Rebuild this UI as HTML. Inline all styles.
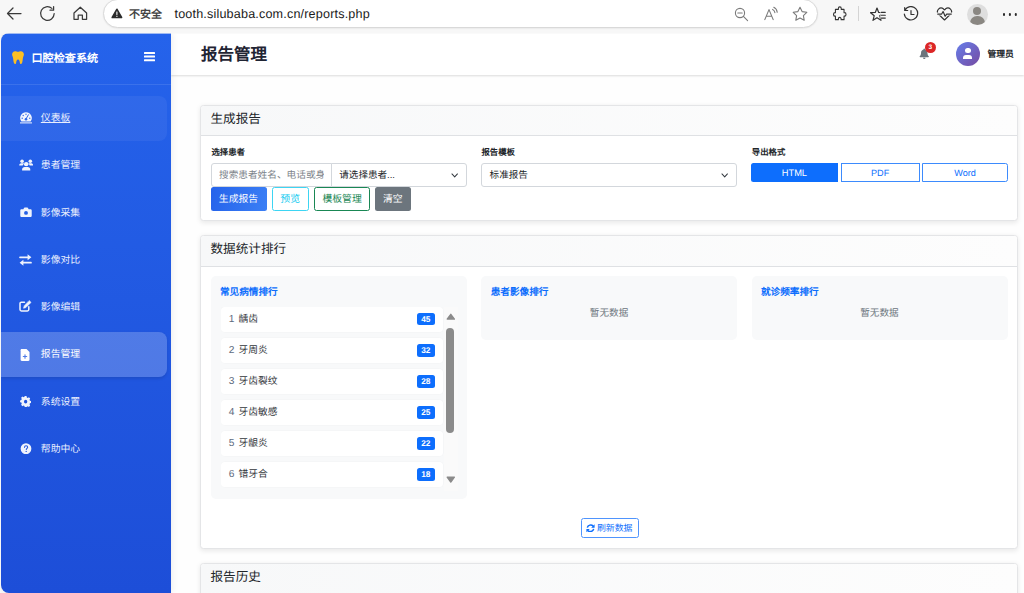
<!DOCTYPE html>
<html lang="zh-CN">
<head>
<meta charset="utf-8">
<title>报告管理</title>
<style>
*{box-sizing:border-box;margin:0;padding:0}
html,body{width:1024px;height:593px;overflow:hidden}
body{font-family:"Liberation Sans",sans-serif;background:#f7f7f7;position:relative;color:#212529;text-rendering:geometricPrecision}
.abs{position:absolute}
svg{display:block}
/* browser toolbar */
#tb{position:absolute;left:0;top:0;width:1024px;height:34px;background:#f7f7f7}
#pill{position:absolute;left:103px;top:-1px;width:715px;height:28.5px;border:1px solid #d9d9d9;border-radius:14.5px;background:#fff;box-shadow:0 0.5px 1.5px rgba(0,0,0,.08)}
#sec{position:absolute;left:129px;top:7.5px;font-size:11px;font-weight:bold;color:#444;line-height:14px;letter-spacing:0}
#url{position:absolute;left:174.5px;top:5.5px;font-size:12.6px;color:#1b1b1b;line-height:17px;white-space:nowrap;letter-spacing:0.17px}
/* page */
#page{position:absolute;left:1px;top:33px;width:1023px;height:560px;overflow:hidden}
#main{position:absolute;left:165px;top:0;width:858px;height:560px;background:#fefefe}
#side{position:absolute;left:0;top:0;width:170px;height:100%;border-radius:8px 0 0 8px;background:linear-gradient(180deg,#2563eb 0%,#1d4ed8 100%);box-shadow:1px 0 7px rgba(0,0,0,.08);z-index:3}
#shead{position:absolute;left:0;top:0;width:170px;height:52px;border-bottom:1px solid rgba(255,255,255,.10)}
#brand{position:absolute;left:30.5px;top:19.2px;font-size:11.1px;font-weight:bold;color:#fff;line-height:14px;white-space:nowrap}
.mi{position:absolute;left:0;width:165.5px;height:44.6px;border-radius:0 8px 8px 0;color:#eef2ff}
.mi span{position:absolute;left:39.8px;top:16.1px;font-size:9.85px;line-height:14px;white-space:nowrap;color:#e9eefd}
.mi svg{position:absolute;left:18px;top:16.5px;opacity:.93}
.mi.act svg{opacity:1}
.mi.hov{background:rgba(255,255,255,.055)}
.mi.hov span{text-decoration:underline}
.mi.act{background:rgba(255,255,255,.21);box-shadow:0 1.5px 3px rgba(0,0,0,.10)}
.mi.act span{color:#fff}
/* header */
#hdr{position:absolute;left:170px;top:0;width:853px;height:42px;background:#fff;box-shadow:0 1px 2px rgba(0,0,0,.14);z-index:2}
#ttl{position:absolute;left:30px;top:11.2px;font-size:16.5px;font-weight:bold;color:#1f2433;line-height:22px;white-space:nowrap}
#adm{position:absolute;left:816.5px;top:14.5px;font-size:8.8px;font-weight:bold;color:#212529;line-height:12px;white-space:nowrap}
/* cards */
.card{position:absolute;left:199px;width:818px;background:#fff;border:1px solid #e4e5e7;border-radius:3.5px;box-shadow:0 1.5px 5px rgba(0,0,0,.085)}
.ch{position:absolute;left:0;top:0;width:100%;height:30px;background:linear-gradient(90deg,#f7f8f9 0%,#fdfdfd 100%);border-bottom:1px solid #dfe1e4;border-radius:3px 3px 0 0}
.ch span{position:absolute;left:9.5px;top:5px;font-size:12.6px;line-height:17px;color:#212529;white-space:nowrap}
.lbl{position:absolute;font-size:8.4px;font-weight:bold;color:#212529;line-height:12px;white-space:nowrap}
.inp{position:absolute;height:24px;border:1px solid #d3d7dc;border-radius:3px;background:#fff;font-size:9.55px;line-height:23.6px;color:#212529;white-space:nowrap;overflow:hidden}
.btn{position:absolute;border-radius:2.5px;font-size:9.3px;text-align:center;white-space:nowrap}
.b2{font-size:9.85px;padding-top:.8px}
.pan{position:absolute;background:#f8f9fa;border-radius:5px}
.pt{position:absolute;left:9.4px;top:9.7px;font-size:9.63px;font-weight:bold;color:#0d6efd;line-height:13px;white-space:nowrap}
.nodata{position:absolute;left:0;width:100%;top:31px;text-align:center;font-size:9.65px;color:#6c757d;line-height:13px}
.li{position:absolute;left:0;width:222px;height:24.9px;background:#fff;border-radius:3.5px;box-shadow:0 0 0 .5px rgba(0,0,0,.025)}
.li span{position:absolute;left:18.1px;top:5.8px;font-size:9.75px;line-height:13px;color:#33373c;white-space:nowrap}
.li i{position:absolute;left:8.3px;top:5.7px;font-size:10.2px;line-height:13px;color:#5d6a7e;font-style:normal}
.li b{position:absolute;left:196.1px;top:6.3px;width:18.4px;height:12.3px;background:#0d6efd;border-radius:2.5px;color:#fff;font-size:8.3px;line-height:12.6px;text-align:center;font-weight:bold}
</style>
</head>
<body>
<div id="tb">
  <svg class="abs" style="left:6px;top:5px" width="17" height="17" viewBox="0 0 17 17" fill="none" stroke="#3a3a3a" stroke-width="1.25" stroke-linecap="round" stroke-linejoin="round"><path d="M15 8.5H1.5M7 3L1.5 8.5 7 14"/></svg>
  <svg class="abs" style="left:39px;top:5px" width="17" height="17" viewBox="0 0 17 17" fill="none" stroke="#3a3a3a" stroke-width="1.25" stroke-linecap="round" stroke-linejoin="round"><path d="M15.2 8.6a6.8 6.8 0 1 1-2.3-5.2M14.6 1.6v3.6H11"/></svg>
  <svg class="abs" style="left:72px;top:5px" width="17" height="17" viewBox="0 0 17 17" fill="none" stroke="#3a3a3a" stroke-width="1.25" stroke-linejoin="round"><path d="M2 8L8.3 2.2 14.6 8v6.3h-4.2V10H6.2v4.3H2z"/></svg>
  <div id="pill"></div>
  <svg class="abs" style="left:111.3px;top:8px" width="11.800" height="10.800" viewBox="0 0 11 10"><path d="M5.5 1.2L9.8 8.8H1.2z" fill="#2b2b2b" stroke="#2b2b2b" stroke-width="1.6" stroke-linejoin="round"/><rect x="5" y="3.3" width="1" height="3.1" fill="#fff"/><rect x="5" y="7.2" width="1" height="1.1" fill="#fff"/></svg>
  <div id="sec">不安全</div>
  <div id="url">tooth.silubaba.com.cn/reports.php</div>
  <!-- right icons inside pill -->
  <svg class="abs" style="left:734px;top:7px" width="15" height="15" viewBox="0 0 15 15" fill="none" stroke="#7a7a7a" stroke-width="1.1" stroke-linecap="round"><circle cx="6" cy="6" r="4.6"/><path d="M9.4 9.4L13.6 13.6M3.8 6h4.4"/></svg>
  <svg class="abs" style="left:762px;top:6px" width="18" height="16" viewBox="0 0 18 16" fill="none" stroke="#7a7a7a" stroke-width="1.1" stroke-linecap="round" stroke-linejoin="round"><path d="M2.8 13.6L7 3.6l4.2 10M4.2 10.3h5.6M10.6 3.4c1.3.6 2.1 1.800 2.300 3.200M11.800 1.300c2 1 3.200 2.800 3.400 5"/></svg>
  <svg class="abs" style="left:792px;top:6px" width="16" height="16" viewBox="0 0 16 16" fill="none" stroke="#7a7a7a" stroke-width="1.1" stroke-linejoin="round"><path d="M8 1.3l2.1 4.3 4.7.7-3.4 3.3.8 4.7L8 12.1l-4.2 2.2.8-4.7L1.2 6.3l4.7-.7z"/></svg>
  <!-- puzzle -->
  <svg class="abs" style="left:833.3px;top:6.2px" width="13.8" height="16.3" viewBox="0 0 16 16" preserveAspectRatio="none" fill="none" stroke="#333" stroke-width="1.25" stroke-linejoin="round"><path d="M6.2 2.6a1.7 1.7 0 0 1 3.4 0v.8h3.2v3.2h.6a1.7 1.7 0 0 1 0 3.4h-.6v3.4H9.4v-.6a1.6 1.6 0 0 0-3.2 0v.6H2.8V10h-.5a1.7 1.7 0 0 1 0-3.4h.5V3.4h3.4z"/></svg>
  <div class="abs" style="left:858px;top:6px;width:1px;height:15px;background:#d4d4d4"></div>
  <svg class="abs" style="left:869.8px;top:5.8px" width="18" height="17" viewBox="0 0 18 17" fill="none" stroke="#333" stroke-width="1.2" stroke-linejoin="round" stroke-linecap="round"><path d="M7 2L8.7 6.450 13.470 6.700 9.760 9.700 11 14.300 7 11.700 3 14.300 4.240 9.700.53 6.700 5.300 6.450z"/><rect x="10.400" y="4.300" width="7.600" height="8.600" fill="#f7f7f7" stroke="none"/><path d="M11.300 6.300h4M11.300 9.200h4M11.300 12.100h4" stroke-width="1.150"/></svg>
  <svg class="abs" style="left:903px;top:6px" width="16" height="16" viewBox="0 0 16 16" fill="none" stroke="#333" stroke-width="1.2" stroke-linejoin="round" stroke-linecap="round"><path d="M2 4.2A6.7 6.7 0 1 1 1.3 8M1.7 1.5v3h3M8 4.5v4h3"/></svg>
  <svg class="abs" style="left:935.5px;top:5.600px" width="17" height="15.500" viewBox="0 0 18 16" preserveAspectRatio="none" fill="none" stroke="#333" stroke-width="1.250" stroke-linejoin="round" stroke-linecap="round"><path d="M9 14.400L2.500 8.300a3.800 3.800 0 0 1 5.300-5.400L9 4.100l1.200-1.200a3.800 3.800 0 0 1 5.300 5.400z"/><path d="M1.800 8.300h4.200l1.500-2.700 2.200 5 1.600-2.300h4.900" stroke="#f7f7f7" stroke-width="3"/><path d="M1.800 8.300h4.200l1.500-2.700 2.200 5 1.600-2.300h4.900"/></svg>
  <div class="abs" style="left:966.500px;top:3.500px;width:21px;height:21px;border-radius:50%;background:#dedede;overflow:hidden"><div class="abs" style="left:6.500px;top:3.500px;width:8px;height:8px;border-radius:50%;background:#8a8782"></div><div class="abs" style="left:3px;top:12.500px;width:15px;height:12px;border-radius:7px 7px 0 0;background:#8a8782"></div></div>
  <div class="abs" style="left:1002.500px;top:13px;width:2.700px;height:2.700px;border-radius:50%;background:#2a2a2a;box-shadow:5.900px 0 0 #2a2a2a,11.800px 0 0 #2a2a2a"></div>
</div>

<div class="abs" style="left:0;top:33px;width:1024px;height:1px;background:rgba(247,247,247,.6);z-index:10"></div>
<div id="page">
  <div id="main"></div>
  <div id="side">
    <div id="shead">
      <svg class="abs" style="left:11px;top:18px" width="12" height="13.300" viewBox="0 0 12 14" preserveAspectRatio="none"><path d="M3.100.2C1.300.2.100 1.600.100 3.500c0 1.500.600 2.400.900 3.600.300 1.300.300 3.200.800 5 .200.900.700 1.600 1.300 1.600.700 0 .900-.800 1.100-1.700.300-1.400.500-3 1.800-3s1.500 1.600 1.800 3c.200.900.400 1.700 1.100 1.700.600 0 1.100-.700 1.300-1.600.500-1.800.500-3.700.800-5 .300-1.200.900-2.100.900-3.600C11.900 1.600 10.700.2 8.900.2 7.700.2 7 .9 6 .9S4.300.2 3.100.2z" fill="#fbbf24"/></svg>
      <div id="brand">口腔检查系统</div>
      <div class="abs" style="left:143px;top:19.400px;width:10.500px;height:2.100px;background:#fff;border-radius:.5px;box-shadow:0 3.600px 0 #fff,0 7.200px 0 #fff"></div>
    </div>
    <div class="mi hov" style="top:63.00px"><svg style="left:19px;top:15.600px" width="12" height="12" viewBox="0 0 12 12"><path d="M6 .2a5.800 5.800 0 0 0-4.900 8.900c.2.400.5.500.9.500h8c.4 0 .7-.100.900-.500A5.800 5.800 0 0 0 6 .2z" fill="#fff"/><circle cx="6" cy="2.300" r=".7" fill="#2f68e8"/><circle cx="3.200" cy="3.500" r=".7" fill="#2f68e8"/><circle cx="2.200" cy="6.300" r=".7" fill="#2f68e8"/><circle cx="9.800" cy="6.300" r=".7" fill="#2f68e8"/><path d="M8.400 2.800L6.200 6.600" stroke="#2f68e8" stroke-width="1" stroke-linecap="round"/><circle cx="6" cy="7.200" r="1.300" fill="#2f68e8"/><rect x="0" y="10.400" width="12" height="1" fill="#fff"/></svg><span>仪表板</span></div>
    <div class="mi" style="top:110.28px"><svg style="left:18px;top:15.700px" width="14.400" height="11.800" viewBox="0 0 14 12" preserveAspectRatio="none" fill="#fff"><circle cx="3" cy="2.200" r="1.750"/><circle cx="11" cy="2.200" r="1.750"/><path d="M.2 6.700c0-1.400.9-2.300 2.100-2.300h1.500c.5 0 .9.100 1.200.4-.8.500-1.300 1.200-1.400 1.900zM13.800 6.700c0-1.400-.9-2.300-2.100-2.300h-1.500c-.5 0-.9.100-1.200.4.800.5 1.300 1.200 1.400 1.900z"/><circle cx="7" cy="5.300" r="2.150"/><path d="M3 11.800v-.9c0-1.600 1.100-2.700 2.600-2.700h2.800c1.500 0 2.600 1.100 2.600 2.700v.9z"/></svg><span>患者管理</span></div>
    <div class="mi" style="top:157.56px"><svg style="left:18.500px;top:16px" width="12" height="10.600" viewBox="0 0 13 12" preserveAspectRatio="none"><path d="M4.200 1.300L3.600 2.600H1.700C.9 2.600.3 3.200.3 4v5.800c0 .8.600 1.400 1.400 1.400h9.600c.8 0 1.400-.600 1.400-1.400V4c0-.8-.600-1.400-1.400-1.400H9.400L8.800 1.300c-.200-.400-.500-.600-.900-.600H5.100c-.4 0-.7.200-.9.600z" fill="#fff"/><circle cx="6.500" cy="6.700" r="2.100" fill="#2560e6"/></svg><span>影像采集</span></div>
    <div class="mi" style="top:204.84px"><svg style="top:15.900px" width="13" height="12" viewBox="0 0 13 12"><path d="M1 3.300h8.500M12 8.700H3.500" stroke="#fff" stroke-width="1.700" stroke-linecap="round" fill="none"/><path d="M8.600.3l3.800 3-3.800 3zM4.400 5.700l-3.800 3 3.800 3z" fill="#fff"/></svg><span>影像对比</span></div>
    <div class="mi" style="top:252.12px"><svg style="top:15.300px" width="13" height="12" viewBox="0 0 13 12" fill="none" stroke="#fff" stroke-width="1.500" stroke-linecap="round" stroke-linejoin="round"><path d="M5.500 2.200H2.400C1.600 2.200 1 2.800 1 3.600v6c0 .8.600 1.400 1.400 1.400h6c.8 0 1.400-.6 1.400-1.400V6.800"/><path d="M10.400.8l1.600 1.600-5.200 5.200-2.200.6.600-2.200z" fill="#fff" stroke-width=".7"/></svg><span>影像编辑</span></div>
    <div class="mi act" style="top:299.40px"><svg width="13" height="12" viewBox="0 0 13 12"><path d="M2.800 0h4.700l3 3v7.800c0 .7-.5 1.200-1.200 1.200H2.800c-.7 0-1.200-.5-1.200-1.200V1.200C1.600.5 2.100 0 2.800 0z" fill="#fff"/><path d="M6 5.800v3.400M4.300 7.500h3.400" stroke="#4f7be6" stroke-width="1.100" stroke-linecap="round"/></svg><span>报告管理</span></div>
    <div class="mi" style="top:346.68px"><svg style="left:18.800px;top:16.400px" width="11.300" height="11.300" viewBox="0 0 13 12" preserveAspectRatio="none"><path d="M5.500 0h2l.4 1.500 1 .5 1.400-.7 1.400 1.400-.7 1.400.4 1 1.500.4v1.900l-1.500.4-.4 1 .7 1.400-1.400 1.400-1.400-.7-1 .4L7.500 12h-2l-.4-1.500-1-.4-1.400.7-1.400-1.400.7-1.400-.4-1L.1 6.600V4.700l1.500-.4.400-1-.7-1.400L2.700.5l1.400.7 1-.5z" fill="#fff"/><circle cx="6.500" cy="6" r="1.900" fill="#2154de"/></svg><span>系统设置</span></div>
    <div class="mi" style="top:393.96px"><svg style="left:18.500px;top:16px" width="12" height="11.400" viewBox="0 0 13 12" preserveAspectRatio="none"><circle cx="6.500" cy="6" r="5.800" fill="#fff"/><path d="M4.900 4.600c0-1 .7-1.600 1.700-1.600s1.700.6 1.700 1.500c0 1.100-1.500 1.200-1.500 2.400" stroke="#2053dc" stroke-width="1.100" fill="none" stroke-linecap="round"/><circle cx="6.700" cy="8.900" r=".7" fill="#2053dc"/></svg><span>帮助中心</span></div>
  </div>

  <div id="hdr">
    <div id="ttl">报告管理</div>
    <svg class="abs" style="left:748px;top:14.500px" width="10.5" height="11" viewBox="0 0 13 14"><path d="M6.500.5c-.5 0-.9.400-.9.900v.4C3.700 2.200 2.400 3.900 2.400 5.900c0 2.600-.8 3.600-1.500 4.300-.2.200-.3.500-.3.700 0 .5.400.8.900.8h10c.5 0 .9-.3.900-.8 0-.2-.1-.5-.3-.7-.7-.7-1.500-1.700-1.500-4.300 0-2-1.300-3.700-3.200-4.100v-.4c0-.5-.4-.9-.9-.9zM4.900 12.300a1.600 1.600 0 0 0 3.200 0z" fill="#6c757d"/></svg>
    <div class="abs" style="left:753.600px;top:8.500px;width:11.200px;height:11.200px;border-radius:50%;background:#dc2626;color:#fff;font-size:6.500px;font-weight:bold;line-height:11.200px;text-align:center">3</div>
    <div class="abs" style="left:784.700px;top:8.600px;width:24.400px;height:24.400px;border-radius:50%;background:linear-gradient(135deg,#667eea,#764ba2);overflow:hidden"><div class="abs" style="left:9.400px;top:6px;width:5.600px;height:5.600px;border-radius:50%;background:#fff"></div><div class="abs" style="left:7.700px;top:13px;width:9px;height:4.600px;border-radius:3px 3px .5px .5px;background:#fff"></div></div>
    <div id="adm">管理员</div>
  </div>

  <!-- card 1 -->
  <div class="card" style="top:72px;height:116px">
    <div class="ch"><span>生成报告</span></div>
    <div class="lbl" style="left:10.5px;top:40px">选择患者</div>
    <div class="inp" style="left:9.5px;top:56.800px;width:121px;border-radius:3px 0 0 3px;color:#7d848b;padding-left:7.500px"><div style="width:105.400px;overflow:hidden;white-space:nowrap;font-size:9.660px">搜索患者姓名、电话或身份证</div></div>
    <div class="inp" style="left:129.5px;top:56.800px;width:136px;border-radius:0 3px 3px 0;padding-left:7.800px">请选择患者...<svg class="abs" style="left:119.300px;top:9.300px" width="7.400" height="5.500" viewBox="0 0 8 6" fill="none" stroke="#343a40" stroke-width="1.100" stroke-linecap="round" stroke-linejoin="round"><path d="M1 1l3 3.200 3-3.200"/></svg></div>
    <div class="lbl" style="left:280.5px;top:40px">报告模板</div>
    <div class="inp" style="left:280.1px;top:56.800px;width:255.500px;padding-left:7.500px">标准报告<svg class="abs" style="left:239.300px;top:9.300px" width="7.400" height="5.500" viewBox="0 0 8 6" fill="none" stroke="#343a40" stroke-width="1.100" stroke-linecap="round" stroke-linejoin="round"><path d="M1 1l3 3.200 3-3.200"/></svg></div>
    <div class="lbl" style="left:550.8px;top:40px">导出格式</div>
    <div class="btn" style="left:550px;top:57px;width:86.800px;height:19.300px;line-height:19.300px;padding-top:1.400px;background:#0d6efd;color:#fff;border-radius:2.500px 0 0 2.500px;font-size:9.300px">HTML</div>
    <div class="btn" style="left:639.5px;top:57px;width:79.300px;height:19.300px;line-height:17.300px;padding-top:1.400px;border:1px solid #3d8bfd;color:#0d6efd;border-radius:0;font-size:9.100px">PDF</div>
    <div class="btn" style="left:721.3px;top:57px;width:85.700px;height:19.300px;line-height:17.300px;padding-top:1.400px;border:1px solid #3d8bfd;color:#0d6efd;border-radius:0 2.500px 2.500px 0;font-size:9.100px">Word</div>
    <div class="btn b2" style="left:9.5px;top:81px;width:56px;height:24px;line-height:24px;background:linear-gradient(100deg,#2563eb,#3b7ff5);color:#fff">生成报告</div>
    <div class="btn b2" style="left:70.7px;top:81px;width:37px;height:24px;line-height:22px;border:1px solid #3dd5f3;color:#0dcaf0">预览</div>
    <div class="btn b2" style="left:112.7px;top:81px;width:56.800px;height:24px;line-height:22px;border:1px solid #198754;color:#198754">模板管理</div>
    <div class="btn b2" style="left:173.7px;top:81px;width:36.300px;height:24px;line-height:24px;background:#6c757d;color:#fff">清空</div>
  </div>

  <!-- card 2 -->
  <div class="card" style="top:202px;height:314px">
    <div class="ch" style="height:31px"><span style="top:5.300px">数据统计排行</span></div>
    <div class="pan" style="left:9.5px;top:40px;width:256px;height:223px">
      <div class="pt">常见病情排行</div>
      <div class="abs" id="list" style="left:10px;top:30.900px;width:237.300px;height:184px;overflow:hidden">
        <div class="li" style="top:0px"><i>1</i><span>龋齿</span><b>45</b></div>
        <div class="li" style="top:31.02px"><i>2</i><span>牙周炎</span><b>32</b></div>
        <div class="li" style="top:62.04px"><i>3</i><span>牙齿裂纹</span><b>28</b></div>
        <div class="li" style="top:93.06px"><i>4</i><span>牙齿敏感</span><b>25</b></div>
        <div class="li" style="top:124.08px"><i>5</i><span>牙龈炎</span><b>22</b></div>
        <div class="li" style="top:155.1px"><i>6</i><span>错牙合</span><b>18</b></div>
        <div class="abs" style="left:223.300px;top:0;width:14px;height:184px;background:#fafafa"></div>
        <div class="abs" style="left:225.700px;top:20.700px;width:8.300px;height:105.600px;border-radius:4.150px;background:#8b8b8b"></div>
        <svg class="abs" style="left:225.100px;top:6.600px" width="9.600" height="7.400" viewBox="0 0 9.600 7.200"><path d="M4.800 1.200L8.400 6H1.200z" fill="#8b8b8b" stroke="#8b8b8b" stroke-width="1.400" stroke-linejoin="round"/></svg>
        <svg class="abs" style="left:225.100px;top:169.600px" width="9.600" height="7.200" viewBox="0 0 9.600 7.200"><path d="M4.800 6L8.400 1.200H1.200z" fill="#8b8b8b" stroke="#8b8b8b" stroke-width="1.400" stroke-linejoin="round"/></svg>
      </div>
    </div>
    <div class="pan" style="left:280.3px;top:40px;width:255.500px;height:63.500px"><div class="pt">患者影像排行</div><div class="nodata">暂无数据</div></div>
    <div class="pan" style="left:550.5px;top:40px;width:256px;height:63.500px"><div class="pt">就诊频率排行</div><div class="nodata">暂无数据</div></div>
    <div class="btn" style="left:379.5px;top:282px;width:58.400px;height:19.800px;line-height:18.400px;border:1px solid #4f94fd;color:#0d6efd;font-size:8.900px;text-align:left;padding-left:15.400px"><svg class="abs" style="left:4.500px;top:4.600px" width="9" height="8.600" viewBox="0 0 9 8.600" fill="none" stroke="#0d6efd" stroke-width="1.500" stroke-linecap="butt"><path d="M1.300 3.700A3.400 3.400 0 0 1 7.200 2.200M7.700 4.900A3.400 3.400 0 0 1 1.800 6.400"/><path d="M8.600.3v3.400H5.200zM.4 8.300V4.900h3.400z" fill="#0d6efd" stroke="none"/></svg>刷新数据</div>
  </div>

  <!-- card 3 -->
  <div class="card" style="top:530px;height:60px">
    <div class="ch"><span>报告历史</span></div>
  </div>
</div>
</body>
</html>
